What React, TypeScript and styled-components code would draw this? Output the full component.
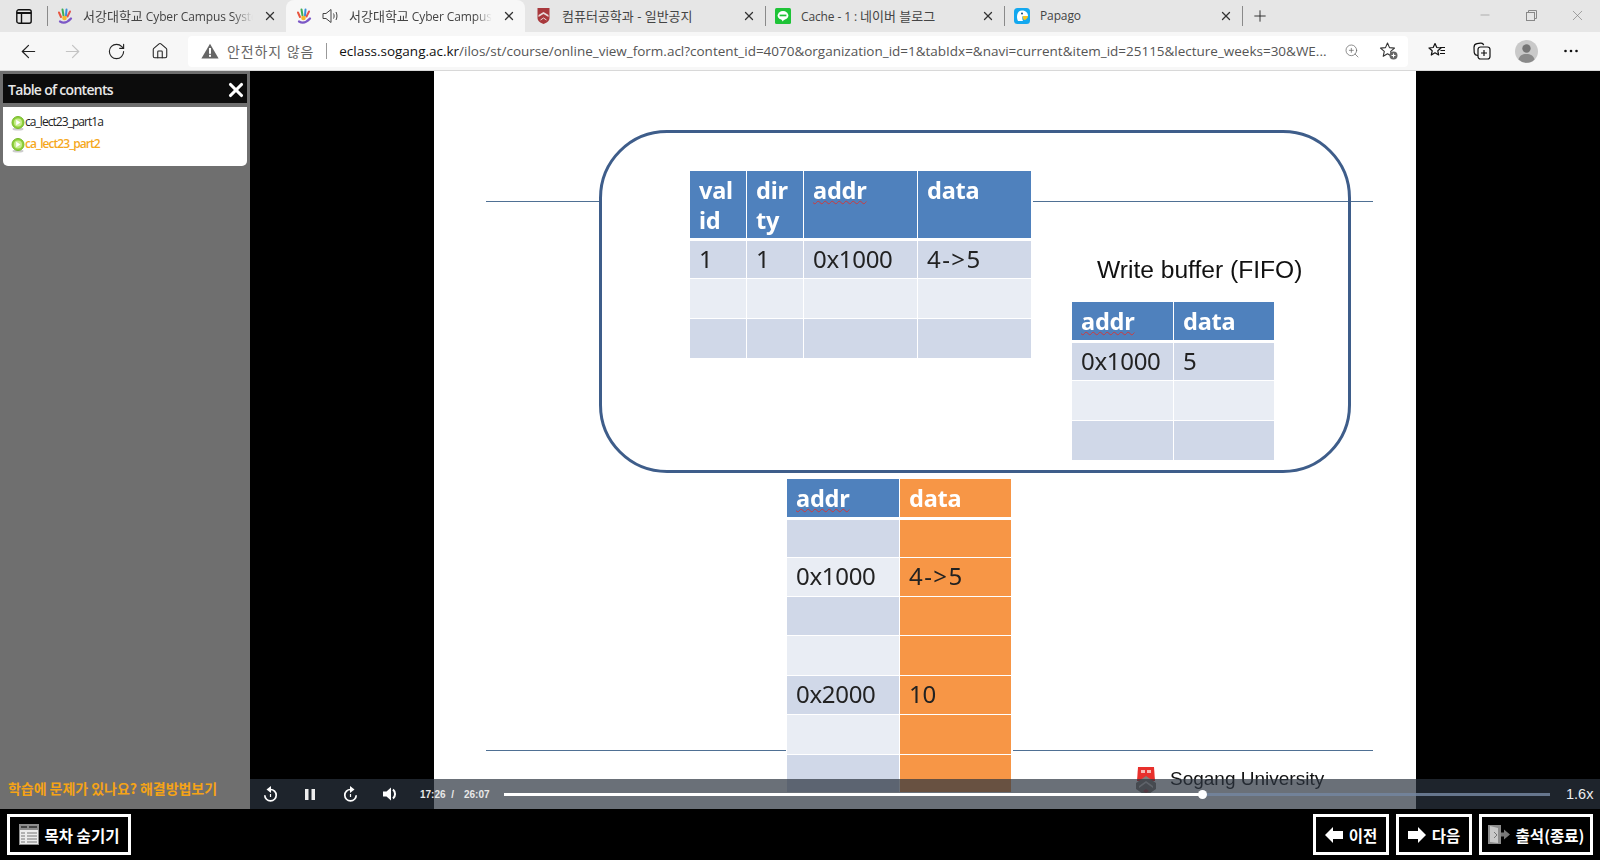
import React from "react";
import styled, { createGlobalStyle } from "styled-components";
import { ArrowLeft, ArrowRight, RotateCw, Home, ZoomIn, X, Plus, Minus } from "lucide-react";

const Global = createGlobalStyle`
  html, body { margin: 0; padding: 0; background: #000; }
  body { font-family: "Open Sans", "Noto Sans CJK KR", sans-serif; overflow: hidden; }
  * { box-sizing: border-box; }
`;
const KR = `"Open Sans", "Noto Sans CJK KR", sans-serif`;
const Page = styled.div`width:1600px;height:860px;display:flex;flex-direction:column;overflow:hidden;background:#000;`;

/* ---- browser chrome ---- */
const TabStrip = styled.div`height:32px;background:#e6e6e6;display:flex;align-items:stretch;flex:none;`;
const SideToggle = styled.div`width:47px;display:flex;align-items:center;justify-content:center;flex:none;`;
const Tab = styled.div<{ $w: number; $active?: boolean; $sep?: boolean }>`
  width:${p => p.$w}px;flex:none;display:flex;align-items:center;gap:10px;padding:0 9px 0 10px;position:relative;
  background:${p => (p.$active ? "#f7f7f7" : "transparent")};
  border-radius:${p => (p.$active ? "8px 8px 0 0" : "0")};
  ${p => p.$sep ? `&::before{content:"";position:absolute;left:0;top:6px;height:20px;width:1px;background:#8a8a8a;}` : ""}
`;
const TabTitle = styled.div<{ $fade?: boolean }>`
  flex:1;min-width:0;white-space:nowrap;overflow:hidden;font:12px ${KR};color:#444;line-height:32px;letter-spacing:-.12px;
  ${p => p.$fade ? `-webkit-mask-image:linear-gradient(90deg,#000 88%,transparent 100%);mask-image:linear-gradient(90deg,#000 88%,transparent 100%);` : ""}
`;
const Hangul = styled.span`font-size:13px;letter-spacing:0;`;
const NewTab = styled.div`
  width:35px;flex:none;display:flex;align-items:center;justify-content:center;position:relative;
  &::before{content:"";position:absolute;left:0;top:6px;height:20px;width:1px;background:#8a8a8a;}
`;
const WindowButtons = styled.div`margin-left:auto;display:flex;width:138px;align-items:center;color:#777;height:30px;`;
const WindowButton = styled.div`width:46px;display:flex;justify-content:center;`;

const AddressRow = styled.div`height:39px;background:#f7f7f7;display:flex;align-items:center;flex:none;border-bottom:1px solid #d8d8d8;`;
const NavIcons = styled.div`width:188px;display:flex;align-items:center;padding-left:6px;flex:none;`;
const NavButton = styled.div<{ $off?: boolean }>`width:44px;display:flex;justify-content:center;color:${p => p.$off ? "#c4c4c4" : "#222"};`;
const AddressField = styled.div`
  width:1220px;height:31px;background:#fff;border-radius:4px;display:flex;align-items:center;padding-left:13px;flex:none;
`;
const InsecureLabel = styled.span`font:14px ${KR};color:#666;margin-left:8px;letter-spacing:.9px;white-space:nowrap;`;
const AddrDivider = styled.span`width:1px;height:16px;background:#999;margin:0 12px;flex:none;`;
const Url = styled.div`font:13.5px "Open Sans",sans-serif;color:#555;white-space:nowrap;width:988px;flex:none;overflow:hidden;letter-spacing:-.01px;`;
const Host = styled.span`color:#111;`;
const FieldIcons = styled.div`display:flex;align-items:center;margin-left:17px;gap:19px;color:#666;`;
const ToolIcons = styled.div`display:flex;align-items:center;margin-left:7px;`;
const ToolButton = styled.div`width:44.5px;display:flex;justify-content:center;align-items:center;`;

/* ---- player ---- */
const Main = styled.div`height:738px;display:flex;flex:none;`;
const Sidebar = styled.aside`width:250px;flex:none;background:#6f6f6f;padding:3px 3px 0;display:flex;flex-direction:column;`;
const TocHeader = styled.div`height:29px;background:#0c0c0c;display:flex;align-items:center;justify-content:space-between;padding:2px 0 0 5px;color:#e8e8e8;font:600 14px "Open Sans",sans-serif;letter-spacing:-.7px;`;
const TocBody = styled.div`margin-top:4px;height:59px;background:#fff;border-radius:0 0 5px 5px;padding:4px 8px;`;
const TocItem = styled.div<{ $current?: boolean }>`
  height:22px;display:flex;align-items:center;gap:0;font:${p => p.$current ? 600 : 400} 12px "Open Sans",sans-serif;letter-spacing:-.95px;
  color:${p => (p.$current ? "#f5a81c" : "#222")};
  position:relative;top:-1px;
`;
const HelpLink = styled.div`margin-top:auto;margin-bottom:11px;padding-left:5px;color:#f5a316;font:700 14px "Noto Sans CJK KR",sans-serif;letter-spacing:-.05px;white-space:nowrap;`;

const Stage = styled.section`flex:1;background:#000;display:flex;justify-content:center;position:relative;overflow:hidden;`;
const Slide = styled.div`width:982px;height:738px;background:#fff;position:relative;flex:none;filter:blur(.35px);`;
const Frame = styled.div`position:absolute;left:165px;top:59px;width:752px;height:343px;border:3px solid #3e5d8a;border-radius:68px;`;
const Rule = styled.div<{ $x: number; $y: number; $w: number }>`position:absolute;left:${p => p.$x}px;top:${p => p.$y}px;width:${p => p.$w}px;height:1px;background:#4f7094;`;
const SlideLabel = styled.div<{ $x: number; $y: number; $size: number; $color?: string }>`
  position:absolute;left:${p => p.$x}px;top:${p => p.$y}px;font:${p => p.$size}px "Liberation Sans",sans-serif;color:${p => p.$color || "#111"};white-space:nowrap;line-height:1;
`;
const Logo = styled.div`position:absolute;left:701px;top:695px;`;
const Grid = styled.div<{ $x: number; $y: number; $cols: string; $rows: string }>`
  position:absolute;left:${p => p.$x}px;top:${p => p.$y}px;display:grid;grid-template-columns:${p => p.$cols};grid-template-rows:${p => p.$rows};
`;
const BodyCell = styled.div<{ $tone: "dark" | "light" | "orange"; $wide?: boolean }>`
  background:${p => ({ dark: "#d0d8e8", light: "#e9edf4", orange: "#f79646" }[p.$tone])};
  color:#222;font:400 24px/29px "Noto Sans",sans-serif;padding:3px 0 0 9px;
  letter-spacing:${p => (p.$wide ? "1.4px" : "-.3px")};
  margin:0 1.5px 1.5px 0;overflow:hidden;
`;
const HeadCell = styled.div<{ $orange?: boolean }>`
  background:${p => (p.$orange ? "#f79646" : "#4f81bd")};color:#fff;
  font:700 23.5px/30px "Noto Sans",sans-serif;padding:4px 0 0 9px;letter-spacing:-.2px;
  margin:0 1.5px 3.5px 0;overflow:hidden;
`;
const Spell = styled.span`text-decoration:underline wavy #d0393a 1px;text-underline-offset:1px;`;

const ControlBar = styled.div`position:absolute;left:0;right:0;bottom:0;height:30px;background:rgba(43,51,63,.7);display:flex;align-items:center;color:#fff;`;
const CtrlButton = styled.div`width:40px;display:flex;justify-content:center;flex:none;`;
const TimeText = styled.div`font:700 10px "Liberation Sans",sans-serif;color:#e8e8e8;white-space:pre;margin-left:10px;display:flex;width:84px;flex:none;`;
const TimeCur = styled.span`width:44px;`;
const Track = styled.div`width:1046px;height:3px;background:rgba(115,133,159,.85);position:relative;flex:none;`;
const Played = styled.div`height:3px;background:#fff;`;
const Knob = styled.div`position:absolute;top:-3px;width:9px;height:9px;border-radius:50%;background:#fff;margin-left:-4px;`;
const Speed = styled.div`margin-left:16px;font:14.5px "Liberation Sans",sans-serif;color:#eee;`;

/* ---- bottom ---- */
const BottomBar = styled.footer`height:51px;background:#000;display:flex;align-items:flex-start;padding:5px 7px 0;gap:7px;flex:none;`;
const ActionButton = styled.div<{ $w: number; $push?: boolean }>`
  width:${p => p.$w}px;height:41px;border:3px solid #fff;display:flex;align-items:center;justify-content:center;gap:6px;
  color:#fff;font:700 15.5px "Noto Sans CJK KR",sans-serif;white-space:nowrap;${p => (p.$push ? "margin-left:auto;" : "")}
`;

const HandIcon = () => (
  <svg width="16" height="16" viewBox="0 0 16 16" style={{ flex: "none" }} strokeLinecap="round" fill="none">
    <path d="M2 4.500l2 4.500" stroke="#e8553f" strokeWidth="2" />
    <path d="M5.500 1.500l1 6" stroke="#3fae55" strokeWidth="2" />
    <path d="M9.500 1.500l-.5 6" stroke="#3a8fdc" strokeWidth="2" />
    <path d="M13 3.500l-2.500 5" stroke="#e4564f" strokeWidth="2" />
    <circle cx="7.500" cy="10" r="2.300" fill="#f6b72c" />
    <path d="M3 13.500c3.500 2 7.500 1 11-3" stroke="#7c58c6" strokeWidth="2.200" />
  </svg>
);
const CrestIcon = () => (
  <svg width="17" height="18" viewBox="0 0 17 18" style={{ flex: "none" }}>
    <path d="M2.500 1h12v10c0 3-3 5-6 6-3-1-6-3-6-6z" fill="#a8383c" />
    <path d="M3.500 8l5-3 5 3v2l-5-3-5 3z" fill="#e9dcdc" />
    <path d="M5.500 13l3-2 3 2" stroke="#e9dcdc" strokeWidth="1" fill="none" />
  </svg>
);
const LineIcon = () => (
  <svg width="16" height="16" viewBox="0 0 16 16" style={{ flex: "none" }}>
    <rect width="16" height="16" rx="1.500" fill="#1ec337" />
    <ellipse cx="8" cy="7.500" rx="5.400" ry="4.400" fill="#fff" />
    <path d="M6.500 11l1 2.400 2.400-2.400z" fill="#fff" />
    <rect x="4.600" y="6.600" width="6.800" height="1.700" fill="#1ec337" />
  </svg>
);
const PapagoIcon = () => (
  <svg width="16" height="16" viewBox="0 0 16 16" style={{ flex: "none" }}>
    <rect width="16" height="16" rx="3.500" fill="#14a8ef" />
    <path d="M8 2.500c4 0 6 2.500 6 5.500H9c-1 0-1 3 0 5H4C2 9 3 2.500 8 2.500z" fill="#fff" />
    <path d="M9 8h5c0 2-2 4-4 4-1.200-1-1.500-3-1-4z" fill="#f7c51e" />
    <circle cx="8" cy="5.500" r="1" fill="#0b4a7a" />
  </svg>
);
const SpeakerIcon = () => (
  <svg width="17" height="16" viewBox="0 0 17 16" fill="none" stroke="#444" strokeWidth="1" style={{ flex: "none" }}>
    <path d="M1 5.500h3l5-4v13l-5-4H1z" />
    <path d="M11.500 5.500c.8 1.500.8 3.500 0 5M14 4c1.300 2.500 1.300 5.500 0 8" />
  </svg>
);
const SmallX = () => <X size={14} strokeWidth={2.2} color="#333" style={{ flex: "none" }} />;
const PlayDot = () => (
  <svg width="14" height="16" viewBox="0 0 14 16" style={{ flex: "none", marginTop: 3 }}>
    <ellipse cx="7" cy="14" rx="5.500" ry="1.500" fill="#ccc" />
    <circle cx="7" cy="7.500" r="6" fill="#8ed13a" stroke="#77b82c" />
    <circle cx="7" cy="7.500" r="4" fill="#c8ec8e" />
    <path d="M5.200 4.800l4.300 2.700-4.300 2.700z" fill="#fff" />
  </svg>
);
const Warn = () => (
  <svg width="18" height="16" viewBox="0 0 18 16" style={{ flex: "none" }}>
    <path d="M9 .8l8.600 14.700H.4z" fill="#666" />
    <rect x="8" y="5" width="2" height="5.800" fill="#fff" />
    <rect x="8" y="11.800" width="2" height="2" fill="#fff" />
  </svg>
);
const StarAdd = () => (
  <svg width="20" height="20" viewBox="0 0 20 20" fill="none" style={{ flex: "none" }}>
    <path d="M8.500 2l2 4.600 5 .5-3.800 3.300 1.100 4.900-4.300-2.600-4.300 2.600 1.100-4.900-3.800-3.300 5-.5z" stroke="#333" strokeWidth="1.100" strokeLinejoin="round" />
    <circle cx="14.500" cy="14.500" r="4" fill="#666" />
    <path d="M14.500 12.500v4M12.500 14.500h4" stroke="#fff" strokeWidth="1.100" />
  </svg>
);
const StarList = () => (
  <svg width="20" height="20" viewBox="0 0 20 20" fill="none" stroke="#111" strokeWidth="1.200">
    <path d="M8 2.500l1.800 4 4.200.5-3.200 2.800.9 4.200L8 11.800 4.300 14l.9-4.200L2 7l4.200-.5z" strokeLinejoin="round" />
    <path d="M13 6.500h5M13.500 9.500h4.500M13 12.500h5" />
  </svg>
);
const Collections = () => (
  <svg width="20" height="20" viewBox="0 0 20 20" fill="none" stroke="#111" strokeWidth="1.200">
    <rect x="6" y="6" width="12" height="12" rx="2.500" />
    <path d="M12 9v6M9 12h6" />
    <path d="M6 14.500c-2.500 0-3.500-1-3.800-3L2 6.500c0-2 1-3.500 3-3.800l3.500-.5c1.500-.2 2.800.6 3.200 2" />
  </svg>
);
const Profile = () => (
  <svg width="23" height="23" viewBox="0 0 23 23">
    <circle cx="11.500" cy="11.500" r="11.500" fill="#c9c9c9" />
    <circle cx="11.500" cy="8.500" r="4.200" fill="#767676" />
    <path d="M3.500 19.500c1-4 4-5.500 8-5.500s7 1.500 8 5.500a11.500 11.500 0 0 1-16 0z" fill="#8a8a8a" />
  </svg>
);
const Dots = () => (
  <svg width="16" height="4" viewBox="0 0 16 4" fill="#111">
    <circle cx="2.500" cy="2" r="1.300" /><circle cx="8" cy="2" r="1.300" /><circle cx="13.500" cy="2" r="1.300" />
  </svg>
);
const PanelIcon = () => (
  <svg width="16" height="15" viewBox="0 0 16 15" fill="none" stroke="#111" strokeWidth="1.400">
    <rect x=".8" y=".8" width="14.400" height="13.400" rx="2" />
    <path d="M.8 4h14.400" strokeWidth="2" /><path d="M5.500 4v10" />
  </svg>
);
const Restore = () => (
  <svg width="11" height="11" viewBox="0 0 11 11" fill="none" stroke="#888"><rect x=".5" y="2.500" width="8" height="8" /><path d="M2.500 2.500v-2h8v8h-2" /></svg>
);
const Replay = ({ flip }: { flip?: boolean }) => (
  <svg width="15" height="16" viewBox="0 0 15 16" fill="none" stroke="#fff" style={flip ? { transform: "scaleX(-1)" } : undefined}>
    <path d="M7.500 3.500a5.700 5.700 0 1 1-5.700 5.700" strokeWidth="1.700" />
    <path d="M8 0L3.500 3.500 8 7z" fill="#fff" stroke="none" />
    <path d="M7.500 8v3" strokeWidth="1.200" />
  </svg>
);
const PauseIcon = () => (
  <svg width="10" height="11" viewBox="0 0 10 11" fill="#eee"><rect width="3.500" height="11" /><rect x="6.500" width="3.500" height="11" /></svg>
);
const Volume = () => (
  <svg width="15" height="14" viewBox="0 0 15 14"><path d="M0 4.500h3.500L8 .5v13l-4.500-4H0z" fill="#fff" /><path d="M10 2.500c2.700 2.300 2.700 6.700 0 9" stroke="#fff" strokeWidth="2" fill="none" /></svg>
);
const ListIcon = () => (
  <svg width="20" height="21" viewBox="0 0 20 21">
    <rect width="20" height="21" fill="#8d8d8d" />
    <rect x="1" y="6" width="18" height="14" fill="#ececec" />
    <rect x="2" y="2" width="6" height="2" fill="#444" /><rect x="10" y="2" width="8" height="2" fill="#444" />
    <path d="M2 9h4M2 12h4M2 15h4M2 18h4M8 9h10M8 12h10M8 15h10M8 18h10" stroke="#777" />
  </svg>
);
const ArrowPrev = () => (
  <svg width="18" height="16" viewBox="0 0 18 16"><path d="M0 8l8-8v4h10v8H8v4z" fill="#fff" /></svg>
);
const ArrowNext = () => (
  <svg width="18" height="16" viewBox="0 0 18 16"><path d="M18 8l-8-8v4H0v8h10v4z" fill="#fff" /></svg>
);
const DoorIcon = () => (
  <svg width="22" height="21" viewBox="0 0 22 21">
    <path d="M0 1h13v19H0z" fill="#8d8d8d" /><path d="M2 2l8 2v15l-8-1z" fill="#c9c9c9" />
    <path d="M6 8l3 3-3 3" stroke="#777" fill="none" />
    <path d="M22 10.500l-6-5v3h-3v4h3v3z" fill="#777" />
  </svg>
);
const SogangLogo = () => (
  <svg width="22" height="30" viewBox="0 0 22 30">
    <path d="M3 1h16l1 14H2z" fill="#e8302c" />
    <rect x="6" y="4" width="4" height="3" fill="#f6b9b4" /><rect x="12" y="4" width="4" height="3" fill="#f6b9b4" />
    <path d="M1 17l10-7 10 7v6l-10 7-10-7z" fill="#857f7a" />
    <path d="M4 20l7-5 7 5v2l-7-5-7 5z" fill="#d6d1cc" />
    <path d="M8 25l3-2 3 2-3 2z" fill="#b8444a" />
  </svg>
);

const H = HeadCell;
const B = BodyCell;

export default function App() {
  return (
    <Page>
      <Global />
      <TabStrip>
        <SideToggle><PanelIcon /></SideToggle>
        <Tab $w={239} $sep><HandIcon /><TabTitle $fade><Hangul>서강대학교</Hangul> Cyber Campus System</TabTitle><SmallX /></Tab>
        <Tab $w={239} $active><HandIcon /><SpeakerIcon /><TabTitle $fade><Hangul>서강대학교</Hangul> Cyber Campus System</TabTitle><SmallX /></Tab>
        <Tab $w={240}><CrestIcon /><TabTitle><Hangul>컴퓨터공학과 - 일반공지</Hangul></TabTitle><SmallX /></Tab>
        <Tab $w={239} $sep><LineIcon /><TabTitle>Cache - 1 : <Hangul>네이버 블로그</Hangul></TabTitle><SmallX /></Tab>
        <Tab $w={238} $sep><PapagoIcon /><TabTitle>Papago</TabTitle><SmallX /></Tab>
        <NewTab><Plus size={18} strokeWidth={1.2} color="#222" /></NewTab>
        <WindowButtons>
          <WindowButton><Minus size={14} strokeWidth={1} color="#888" /></WindowButton>
          <WindowButton><Restore /></WindowButton>
          <WindowButton><X size={17} strokeWidth={.9} color="#777" /></WindowButton>
        </WindowButtons>
      </TabStrip>
      <AddressRow>
        <NavIcons>
          <NavButton><ArrowLeft size={21} strokeWidth={1.4} /></NavButton>
          <NavButton $off><ArrowRight size={21} strokeWidth={1.4} /></NavButton>
          <NavButton><RotateCw size={19} strokeWidth={1.4} /></NavButton>
          <NavButton><Home size={18} strokeWidth={1.4} /></NavButton>
        </NavIcons>
        <AddressField>
          <Warn />
          <InsecureLabel>안전하지 않음</InsecureLabel>
          <AddrDivider />
          <Url><Host>eclass.sogang.ac.kr</Host>/ilos/st/course/online_view_form.acl?content_id=4070&amp;organization_id=1&amp;tabIdx=&amp;navi=current&amp;item_id=25115&amp;lecture_weeks=30&amp;WE...</Url>
          <FieldIcons><ZoomIn size={16} strokeWidth={1.1} /><StarAdd /></FieldIcons>
        </AddressField>
        <ToolIcons>
          <ToolButton><StarList /></ToolButton>
          <ToolButton><Collections /></ToolButton>
          <ToolButton><Profile /></ToolButton>
          <ToolButton><Dots /></ToolButton>
        </ToolIcons>
      </AddressRow>
      <Main>
        <Sidebar>
          <TocHeader>Table of contents<X size={22} strokeWidth={3.4} color="#fff" /></TocHeader>
          <TocBody>
            <TocItem><PlayDot />ca_lect23_part1a</TocItem>
            <TocItem $current><PlayDot />ca_lect23_part2</TocItem>
          </TocBody>
          <HelpLink>학습에 문제가 있나요? 해결방법보기</HelpLink>
        </Sidebar>
        <Stage>
          <Slide>
            <Rule $x={52} $y={130} $w={115} />
            <Rule $x={599} $y={130} $w={340} />
            <Rule $x={52} $y={679} $w={300} />
            <Rule $x={579} $y={679} $w={360} />
            <Frame />
            <Grid $x={256} $y={100} $cols="57px 57px 114px 114px" $rows="70px 38px 40px 40px">
              <H>val<br />id</H><H>dir<br />ty</H><H><Spell>addr</Spell></H><H>data</H>
              <B $tone="dark">1</B><B $tone="dark">1</B><B $tone="dark">0x1000</B><B $tone="dark" $wide>4-&gt;5</B>
              <B $tone="light" /><B $tone="light" /><B $tone="light" /><B $tone="light" />
              <B $tone="dark" /><B $tone="dark" /><B $tone="dark" /><B $tone="dark" />
            </Grid>
            <SlideLabel $x={663} $y={187} $size={24.6}>Write buffer (FIFO)</SlideLabel>
            <Grid $x={638} $y={231} $cols="102px 101px" $rows="41px 38px 40px 40px">
              <H><Spell>addr</Spell></H><H>data</H>
              <B $tone="dark">0x1000</B><B $tone="dark">5</B>
              <B $tone="light" /><B $tone="light" />
              <B $tone="dark" /><B $tone="dark" />
            </Grid>
            <Grid $x={353} $y={408} $cols="113px 112px" $rows="41px 38px 39px 39px 40px 39px 40px 38px">
              <H><Spell>addr</Spell></H><H $orange>data</H>
              <B $tone="dark" /><B $tone="orange" />
              <B $tone="light">0x1000</B><B $tone="orange" $wide>4-&gt;5</B>
              <B $tone="dark" /><B $tone="orange" />
              <B $tone="light" /><B $tone="orange" />
              <B $tone="dark">0x2000</B><B $tone="orange">10</B>
              <B $tone="light" /><B $tone="orange" />
              <B $tone="dark" /><B $tone="orange" />
            </Grid>
            <Logo><SogangLogo /></Logo>
            <SlideLabel $x={736} $y={698} $size={19}>Sogang University</SlideLabel>
          </Slide>
          <ControlBar>
            <CtrlButton><Replay /></CtrlButton>
            <CtrlButton><PauseIcon /></CtrlButton>
            <CtrlButton><Replay flip /></CtrlButton>
            <CtrlButton><Volume /></CtrlButton>
            <TimeText><TimeCur>17:26  /</TimeCur><span>26:07</span></TimeText>
            <Track>
              <Played style={{ width: "66.7%" }} />
              <Knob style={{ left: "66.7%" }} />
            </Track>
            <Speed>1.6x</Speed>
          </ControlBar>
        </Stage>
      </Main>
      <BottomBar>
        <ActionButton $w={124}><ListIcon />목차 숨기기</ActionButton>
        <ActionButton $w={76} $push><ArrowPrev />이전</ActionButton>
        <ActionButton $w={76}><ArrowNext />다음</ActionButton>
        <ActionButton $w={114}><DoorIcon />출석(종료)</ActionButton>
      </BottomBar>
    </Page>
  );
}
